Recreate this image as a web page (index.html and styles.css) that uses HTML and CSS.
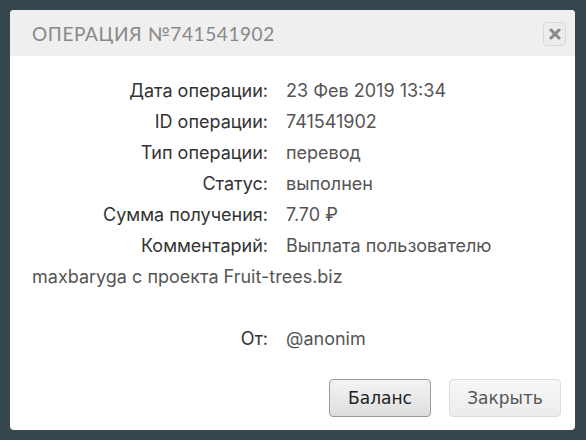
FILE: index.html
```html
<!DOCTYPE html>
<html lang="ru">
<head>
    <meta charset="UTF-8">
    <meta name="viewport" content="width=device-width, initial-scale=1.0">
    <title>Операция</title>
    <link rel="stylesheet" href="styles.css">
</head>
<body>
    <div class="dialog">
        <div class="dialog-header">
            <span class="dialog-title">Операция №741541902</span>
            <button class="close-btn" title="Закрыть">
                <svg width="12" height="12" viewBox="0 0 12 12">
                    <path d="M2 2 L10 10 M10 2 L2 10" stroke="#888" stroke-width="3" stroke-linecap="round"/>
                </svg>
            </button>
        </div>
        <div class="dialog-body">
            <div class="row"><span class="label">Дата операции:</span>23 Фев 2019 13:34</div>
            <div class="row"><span class="label">ID операции:</span>741541902</div>
            <div class="row"><span class="label">Тип операции:</span>перевод</div>
            <div class="row"><span class="label">Статус:</span>выполнен</div>
            <div class="row"><span class="label">Сумма получения:</span>7.70 ₽</div>
            <div class="row"><span class="label">Комментарий:</span>Выплата пользователю</div>
            <div class="row">maxbaryga с проекта Fruit-trees.biz</div>
            <div class="row empty"></div>
            <div class="row"><span class="label">От:</span>@anonim</div>
        </div>
        <div class="dialog-footer">
            <button class="btn btn-main">Баланс</button>
            <button class="btn btn-light">Закрыть</button>
        </div>
    </div>
</body>
</html>
```

FILE: styles.css
```css
body {
    margin: 0;
    padding: 10px 11px 10px 10px;
    background-color: #36464e;
    font-family: Inter, "Open Sans", Arial, sans-serif;
}
.dialog {
    height: 420px;
    background-color: #fff;
    border-radius: 4px;
    display: flex;
    flex-direction: column;
    overflow: hidden;
}
.dialog-header {
    height: 46px;
    background-color: #efefef;
    display: flex;
    align-items: center;
    justify-content: space-between;
    padding: 0 9px 0 22px;
}
.dialog-title {
    font-family: Lato, "Open Sans", sans-serif;
    font-size: 19px;
    text-transform: uppercase;
    letter-spacing: 0.6px;
    color: #888;
}
.close-btn {
    width: 23px;
    height: 24px;
    padding: 0;
    margin-top: 2px;
    border: 1px solid #d8d8d8;
    border-radius: 4px;
    background-color: #ececec;
    display: flex;
    align-items: center;
    justify-content: center;
}
.dialog-body {
    flex: 1;
    padding: 19px 22px 0 22px;
    font-size: 18px;
    line-height: 31px;
    color: #555;
}
.row.empty {
    height: 31px;
}
.label {
    display: inline-block;
    width: 236px;
    margin-right: 18px;
    text-align: right;
    color: #333;
}
.dialog-footer {
    display: flex;
    justify-content: flex-end;
    gap: 18px;
    padding: 0 14px 13px 0;
}
.btn {
    height: 38px;
    padding: 0;
    border-radius: 4px;
    font-family: "DejaVu Sans", Verdana, sans-serif;
    font-size: 17px;
    cursor: pointer;
}
.btn-main {
    width: 102px;
    border: 1px solid #9a9a9a;
    background: linear-gradient(#f4f4f4, #dedede);
    color: #222;
}
.btn-light {
    width: 112px;
    border: 1px solid #dcdcdc;
    background: linear-gradient(#f7f7f7, #ececec);
    color: #555;
}
```
